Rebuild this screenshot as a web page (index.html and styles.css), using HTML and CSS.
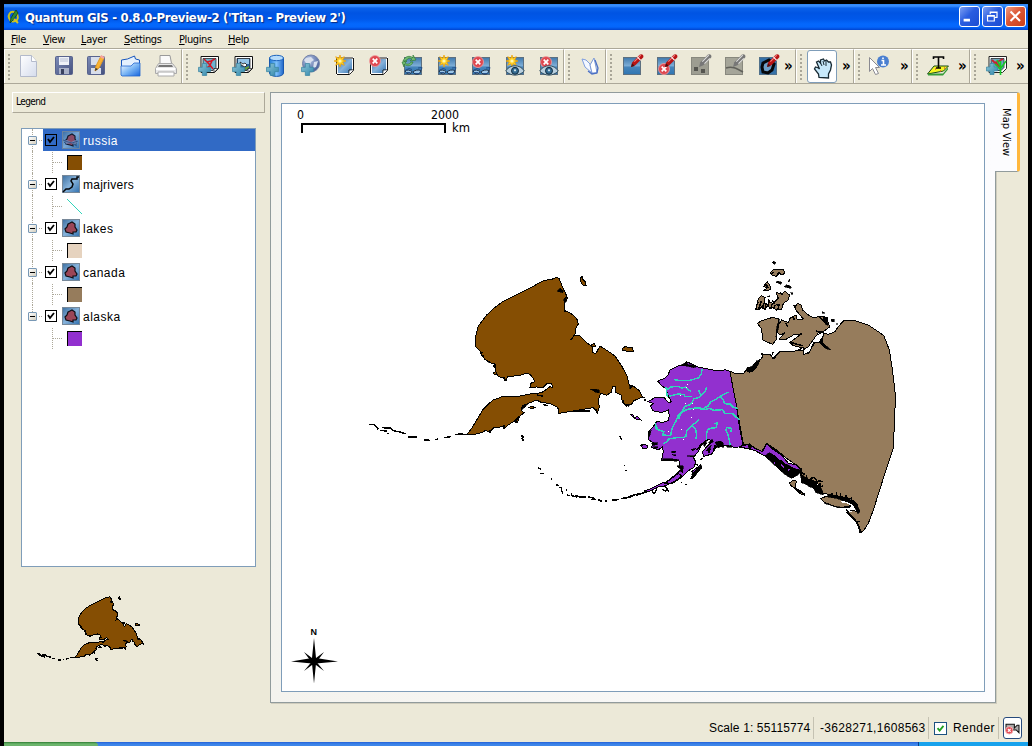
FILE: index.html
```html
<!DOCTYPE html>
<html lang="en">
<head>
<meta charset="utf-8">
<title>Quantum GIS</title>
<link rel="stylesheet" href="styles.css">
</head>
<body>
<svg class="defs" width="0" height="0">
  <defs>
    <linearGradient id="g-blue" x1="0" y1="0" x2="0" y2="1"><stop offset="0" stop-color="#3f78ac"/><stop offset=".5" stop-color="#7fafd8"/><stop offset=".55" stop-color="#4785bb"/><stop offset="1" stop-color="#2f76b2"/></linearGradient>
    <linearGradient id="g-tile" x1="0" y1="0" x2="1" y2="1"><stop offset="0" stop-color="#3d6fa0"/><stop offset=".5" stop-color="#86b2da"/><stop offset="1" stop-color="#2f6fae"/></linearGradient>
    <linearGradient id="g-cyl"><stop offset="0" stop-color="#1f7bd8"/><stop offset=".5" stop-color="#7cc0fa"/><stop offset="1" stop-color="#2166c8"/></linearGradient>
    <linearGradient id="g-doc" x1="0" y1="0" x2="1" y2="1"><stop offset="0" stop-color="#fff"/><stop offset="1" stop-color="#d5dcec"/></linearGradient>
    <linearGradient id="g-save" x1="0" y1="0" x2="1" y2="1"><stop offset="0" stop-color="#7d8cb8"/><stop offset="1" stop-color="#44507e"/></linearGradient>
    <linearGradient id="g-plus" x1="0" y1="0" x2="1" y2="1"><stop offset="0" stop-color="#8fc6d6"/><stop offset="1" stop-color="#2f86ac"/></linearGradient>
    <radialGradient id="g-globe" cx=".35" cy=".3" r=".8"><stop offset="0" stop-color="#b9c8e8"/><stop offset="1" stop-color="#3c5490"/></radialGradient>
    <linearGradient id="g-folder" x1="0" y1="0" x2="1" y2="1"><stop offset="0" stop-color="#fff"/><stop offset=".5" stop-color="#7db8f5"/><stop offset="1" stop-color="#1665dd"/></linearGradient>
    <symbol id="tile" viewBox="0 0 18 18"><rect x=".5" y=".5" width="17" height="17" fill="url(#g-blue)" stroke="#5d7080"/></symbol>
    <symbol id="plus" viewBox="0 0 12 12"><path d="M4 .5h4V4h3.500v4H8v3.500H4V8H.5V4H4z" fill="url(#g-plus)" stroke="#3b86a3" stroke-width=".7"/></symbol>
    <symbol id="star" viewBox="0 0 12 12"><path d="M6 0l1 3.300L10.300 1.700 8.700 5 12 6 8.700 7l1.600 3.300L7 8.700 6 12 5 8.700 1.700 10.300 3.300 7 0 6l3.300-1L1.700 1.700 5 3.300z" fill="#ffd42a" stroke="#f0a000" stroke-width=".7"/><circle cx="6" cy="6" r="1.600" fill="#fff8b0"/></symbol>
    <symbol id="no" viewBox="0 0 12 12"><circle cx="6" cy="6" r="5.500" fill="#df4850" stroke="#f0a0a0" stroke-width=".8"/><path d="M3.700 3.700l4.600 4.600M8.300 3.700L3.700 8.300" stroke="#fff" stroke-width="1.700"/></symbol>
    <symbol id="pen" viewBox="0 0 13 13"><path d="M1 12l1-4L9 .8c2-1.500 4.500.7 3 2.700L5 10.500z" fill="#b81414"/><path d="M4 7L10 1" stroke="#f58080" stroke-width="1"/><path d="M1 12l.8-3.500 2.700 2.700z" fill="#501010"/><path d="M7 3l3 3" stroke="#fff" stroke-width="1"/></symbol>
    <symbol id="graypen" viewBox="0 0 13 13"><path d="M1 12l1-4L9 .8c2-1.500 4.500.7 3 2.700L5 10.500z" fill="#777"/><path d="M4 7L10 1M6 9l5-5" stroke="#ddd"/></symbol>
    <symbol id="eye" viewBox="0 0 20 11"><path d="M.7 6C5-1 15-1 19.300 6 14 11.500 6 11.500.7 6z" fill="#b9d0df" stroke="#35505f" stroke-width="1"/><circle cx="10" cy="5.800" r="3.500" fill="#346b91" stroke="#112b3e"/><circle cx="10" cy="5.300" r="1.100" fill="#d5e7f1"/></symbol>
    <symbol id="specs" viewBox="0 0 20 10"><path d="M2 5c2-1.500 5-1 7 .5C8 9 4 8.500 2 5zM10 6c2-2 5-2.500 8-1.500C17 9 12 9.500 10 6z" fill="#9cc6e8" stroke="#16263a" stroke-width=".9"/><path d="M2 4.500l4-2 3 1M18 4.500l1-3-4 .5M3.500 6.500h4M12 7.500h4" fill="none" stroke="#1d4a86" stroke-width=".9"/></symbol>
    <symbol id="sheet" viewBox="0 0 18 18"><path d="M1 1h16v12l-4 4H1z" fill="url(#g-tile)" stroke="#fff" stroke-width="2"/><path d="M17.500 1v12.500l-4 4H1M13 17v-4h4M.5 17V1H17" fill="none" stroke="#111"/><path d="M13.500 13.500H17l-3.500 3.500z" fill="#fff"/></symbol>
    <symbol id="poly" viewBox="0 0 18 18"><rect x=".5" y=".5" width="17" height="17" fill="url(#g-tile)" stroke="#789"/><path d="M6 5L8 4 10 3 13 5 13 8 15 11 14 13 11 13 11 15 8 14 4 13 3 10 5 8z" fill="#9b4657" stroke="#0d0d13" stroke-width="1.200"/></symbol>
    <g id="russia">
      <path class="brown" d="M597 55L589 53 575 58 550 62 512 83 467 105 425 127 405 142 380 165 355 198 347 230 347 260 360 273 365 285 375 298 390 308 405 312 408 338 415 350 432 353 438 362 442 350 480 346 497 340 510 343 520 355 525 365 512 370 510 382 530 381 550 382 562 370 575 372 578 382 570 380 560 388 545 398 510 402 470 410 432 408 400 420 385 432 368 450 350 480 335 505 322 522 345 523 365 518 375 512 390 515 402 503 428 500 432 507 442 497 460 485 472 488 478 470 492 458 483 450 487 438 505 430 530 420 545 428 570 430 590 440 597 450 597 460 640 453 700 443 712 458 718 440 715 420 722 400 740 406 755 396 757 380 767 380 768 398 783 405 787 425 800 438 815 432 822 422 838 415 848 412 838 392 820 378 808 375 800 345 785 318 765 288 745 274 720 258 708 280 697 278 698 262 683 250 660 228 645 225 632 240 648 218 645 208 655 192 650 175 635 162 615 152 612 130 622 115 615 95 605 75z"/>
      <path class="brown" d="M661 54l5-5 2 8 9 10 1 9-8 1-8-12zM787 265l8-5 23 4 2 10-13 2-20-6zM505 442l13-2 8 3-10 3zM400 337l8-2 3 7-9 1zM693 253l10-2 4 7-9 3z"/>
      <path class="ink" d="M592 94L600 84 611 93 608 98zM611 118L619 110 620 122 614 130zM376 299l14 6-2 4zM690 387l28 2 0 10-10-2zM808 376l10 3-8 9zM797 432l14 2-6 6zM483 450l6-12 14-6-10 12z"/>
      <path class="coast" d="M28 493L43 494 55 508M66 503L90 504 100 512 120 516 136 522M60 511l20 2M80 520h8M145 531h25M191 540l20 1M226 539l7-2M252 533l20-3M284 524l18-2 20 2M487 525l-2 4h6l-5 7 5 6h-5M388 510l3 10M433 495l-2 12M463 484l9 3M550 433l12 5M848 412l5 2M852 420h4M615 155l-2-18"/>
      <path class="coast" d="M405 312l-4 8 6 4M432 353l3 9M478 470l-12 12 2 6M530 405l18 3M640 453h50M712 458l-6-12M787 425l4-4M366 276l-2 10 8 2M560 370l-6 8"/>
    </g>
  </defs>
</svg>

<div class="screen">
  <header class="titlebar">
    <svg class="logo" viewBox="0 0 14 16"><path d="M7 3C3 2 1 6 2 9s4 5 8 2c2-3 0-8-3-8z" fill="none" stroke="#c9c41c" stroke-width="2"/><path d="M9 1l2 3-4 6-4 4 1-5 3-5z" fill="#2d8a33" stroke="#153e19" stroke-width=".8"/><path d="M7 10l4 4" stroke="#d8c521" stroke-width="2"/></svg>
    <span class="title">Quantum GIS - 0.8.0-Preview-2 ('Titan - Preview 2')</span>
    <span class="winbtns">
      <svg class="winbtn" viewBox="0 0 21 21"><rect x="4" y="13" width="7" height="3" fill="#fff"/></svg>
      <svg class="winbtn" viewBox="0 0 21 21"><path d="M8 8V5.500h7.500v6H13M8 6h8" fill="none" stroke="#fff" stroke-width="1.300"/><path d="M5 9.500h7.500v6H5zM5 10h8" fill="none" stroke="#fff" stroke-width="1.300"/></svg>
      <svg class="winbtn close" viewBox="0 0 21 21"><path d="M5 5l10.500 10.500M15.500 5L5 15.500" stroke="#fff" stroke-width="2.300"/></svg>
    </span>
  </header>
  <nav class="menu"><span class="m1"><u>F</u>ile</span><span class="m2"><u>V</u>iew</span><span class="m3"><u>L</u>ayer</span><span class="m4"><u>S</u>ettings</span><span class="m5"><u>P</u>lugins</span><span><u>H</u>elp</span></nav>

  <div class="toolbar">
    <div class="group files"><i class="grip"></i>
      <svg class="ic" viewBox="0 0 24 24"><path d="M4.500 1.500h11l5 6v15h-16z" fill="url(#g-doc)" stroke="#b3bacb"/><path d="M15.500 1.500v6h5" fill="#fff" stroke="#b3bacb"/></svg>
      <svg class="ic" viewBox="0 0 24 24"><rect x="5.500" y="2.500" width="17" height="18" rx="1" fill="url(#g-save)" stroke="#59648e"/><path d="M9 3h10v8H9z" fill="#eef1f8"/><path d="M10 5h8M10 7h8" stroke="#b8c0d5"/><path d="M9 14h10v6H9z" fill="#a9b1c8"/><path d="M11 15h3v5h-3z" fill="#39415f"/></svg>
      <svg class="ic" viewBox="0 0 24 24"><rect x="3.500" y="2.500" width="17" height="18" rx="1" fill="url(#g-save)" stroke="#59648e"/><path d="M7 3h10v8H7zM7 14h10v6H7z" fill="#d8deeb"/><path d="M11 17l1-5 5-10 3 2-5 10z" fill="#f9b233" stroke="#e09a26"/><path d="M16.500 2l3.500 2" stroke="#f5a3a0" stroke-width="2.500"/><path d="M11 17l.5-3 2.500 1z" fill="#333"/></svg>
      <svg class="ic" viewBox="0 0 24 24"><path d="M3.500 10V6l6-1 7-3 1 3 4 1v15h-18z" fill="#e4f0fd" stroke="#1856bd"/><path d="M3 21V12h10l3-3h6v13H4z" fill="url(#g-folder)" stroke="#2265cf" stroke-width=".8"/></svg>
      <svg class="ic" viewBox="0 0 24 24"><path d="M8 12V1.500h10L20 12" fill="#fafafa" stroke="#9a9a9a"/><path d="M6.500 9.500h14l4 5v5h-21v-5z" fill="#e7e7e7" stroke="#aaa"/><path d="M7 11h13l1 2H6z" fill="#777"/><path d="M6 18h16v4H6z" fill="#fff" stroke="#aaa"/><path d="M4 15h19" stroke="#fff" stroke-width="2"/></svg>
    </div>
    <div class="group layers"><i class="grip"></i>
      <svg class="ic" viewBox="0 0 24 24"><path d="M4 2.500h17.500v12l-4 4H4z" fill="#fff" stroke="#111"/><path d="M6 4.500h13v9l-3 3H6z" fill="#6eb4cf" stroke="#111" stroke-width=".7"/><path d="M7 5l3 3 4-1 4-2M10 8l3 3 3 4M9 15l4-4 2-4" fill="none" stroke="#d21725" stroke-width="1.500"/><path d="M17 14.500h4l-4 4z" fill="#fff" stroke="#111" stroke-width=".7"/><use href="#plus" x="1" y="9" width="13" height="13"/></svg>
      <svg class="ic" viewBox="0 0 24 24"><path d="M4 2.500h17.500v12l-4 4H4z" fill="#fff" stroke="#111"/><path d="M6 4.500h13v9l-3 3H6z" fill="#2c65a0" stroke="#111" stroke-width=".7"/><path d="M7 5h11v5H7z" fill="#94c5e8"/><path d="M9 8l3 2 2-1 2 2-2 2-4-2z" fill="#fff" stroke="#111" stroke-width=".8"/><path d="M13 14l5-2v2l-3 2z" fill="#679b35"/><path d="M17 14.500h4l-4 4z" fill="#fff" stroke="#111" stroke-width=".7"/><use href="#plus" x="1" y="9" width="13" height="13"/></svg>
      <svg class="ic" viewBox="0 0 24 24"><path d="M4.500 4v15c0 4.500 14 4.500 14 0V4z" fill="url(#g-cyl)" stroke="#1958ae"/><ellipse cx="11.500" cy="4" rx="7" ry="2.700" fill="#b7dcfb" stroke="#1b63bd"/><use href="#plus" x="1" y="9" width="13" height="13"/></svg>
      <svg class="ic" viewBox="0 0 24 24"><circle cx="12" cy="9.500" r="8.500" fill="url(#g-globe)" stroke="#7684a8"/><path d="M7 4l5-1 3 3-3 2-1 3-4-2-2-3zM15 8l4-1-2 6-3 1z" fill="#d9e0ee"/><use href="#plus" x="2" y="9" width="13" height="13"/></svg>
      <svg class="ic" viewBox="0 0 24 24"><use href="#sheet" x="3" y="3" width="18" height="18"/><use href="#star" x="1" y="1" width="12" height="12"/></svg>
      <svg class="ic" viewBox="0 0 24 24"><use href="#sheet" x="3" y="3" width="18" height="18"/><use href="#no" x="2" y="1" width="12" height="12"/></svg>
      <svg class="ic" viewBox="0 0 24 24"><use href="#tile" x="3" y="3" width="18" height="18"/><path d="M2 7c2-5 7-6 10-3V1l3 5-6 1 2-2C8 3 6 5 5 7zM12 8c-1 4-6 5-9 2v3L1 8l5-1-2 2c2 2 5 1 6-1z" fill="#71ba72" stroke="#327b37" stroke-width=".7"/><use href="#specs" x="2" y="12" width="20" height="10"/></svg>
      <svg class="ic" viewBox="0 0 24 24"><use href="#tile" x="3" y="3" width="18" height="18"/><use href="#star" x="3" y="1" width="12" height="12"/><use href="#specs" x="2" y="12" width="20" height="10"/></svg>
      <svg class="ic" viewBox="0 0 24 24"><use href="#tile" x="3" y="3" width="18" height="18"/><use href="#no" x="3" y="2" width="12" height="12"/><use href="#specs" x="2" y="12" width="20" height="10"/></svg>
      <svg class="ic" viewBox="0 0 24 24"><use href="#tile" x="3" y="3" width="18" height="18"/><use href="#star" x="3" y="1" width="12" height="12"/><use href="#eye" x="2" y="11" width="20" height="11"/></svg>
      <svg class="ic" viewBox="0 0 24 24"><use href="#tile" x="3" y="3" width="18" height="18"/><use href="#no" x="3" y="2" width="12" height="12"/><use href="#eye" x="2" y="11" width="20" height="11"/></svg>
    </div>
    <div class="group help"><i class="grip"></i>
      <svg class="ic" viewBox="0 0 24 24"><path d="M4 5l3 8 7 6-2-9-4-4z" fill="#f4f8ff" stroke="#7f9ee0"/><path d="M12 11l4-7 2 9 1 6-5 0z" fill="#fff" stroke="#7a98d5"/><path d="M17 6l3 8-1 5-5 1-4-3" fill="none" stroke="#4a6fc4" stroke-width="1.300"/></svg>
    </div>
    <div class="group edit"><i class="grip"></i>
      <svg class="ic" viewBox="0 0 24 24"><use href="#tile" x="3" y="3" width="18" height="18"/><use href="#pen" x="10" y="0" width="14" height="14"/></svg>
      <svg class="ic" viewBox="0 0 24 24"><use href="#tile" x="3" y="3" width="18" height="18"/><use href="#no" x="4" y="9" width="12" height="12"/><use href="#pen" x="10" y="0" width="14" height="14"/></svg>
      <svg class="ic" viewBox="0 0 24 24"><rect x="3.500" y="3.500" width="17" height="17" fill="#9d9d91" stroke="#88887e"/><path d="M6 13h4v4H6zM13 15h4v4h-4z" fill="#55554f"/><use href="#graypen" x="10" y="0" width="14" height="14"/></svg>
      <svg class="ic" viewBox="0 0 24 24"><rect x="3.500" y="3.500" width="17" height="17" fill="#a5a599" stroke="#88887e"/><path d="M4 14c6-2 10 0 17 4" fill="none" stroke="#60605a" stroke-width="1.500"/><use href="#graypen" x="10" y="0" width="14" height="14"/></svg>
      <svg class="ic" viewBox="0 0 24 24"><rect x="3.500" y="3.500" width="17" height="17" fill="#3672a8" stroke="#51718b"/><path d="M7 9l6-3 5 4-2 6-4 3-5-1-1-5z" fill="#6d9ec8" stroke="#06070a" stroke-width="3"/><use href="#pen" x="10" y="0" width="14" height="14"/></svg>
      <b class="more">»</b>
    </div>
    <div class="group nav"><i class="grip"></i>
      <span class="active"><svg class="ic" viewBox="0 0 24 24"><path d="M8 21.500l-.5-3.500-4-5 1-2 3 1 1 1-3-7 2-1 2 2 0-3 3-1 1 2 2-1 2 2 2 0 1 3-1 5-2 4 0 4z" fill="#c7e9fb" stroke="#172932" stroke-width="1.300"/><path d="M9 6l2 4M12 5l1 4M15 5v5" stroke="#172932"/></svg></span><b class="more">»</b>
    </div>
    <div class="group info"><i class="grip"></i>
      <svg class="ic" viewBox="0 0 24 24"><path d="M.5 3.500v14l3-3 3 6 3-1-3-6h4z" fill="#fff" stroke="#8a8a91"/><circle cx="14" cy="7.500" r="6" fill="#4a7fd0"/><path d="M12.500 6.500h2v4M12 11h5M14 3.500v1.500" fill="none" stroke="#fff" stroke-width="1.600"/></svg><b class="more">»</b>
    </div>
    <div class="group label"><i class="grip"></i>
      <svg class="ic" viewBox="0 0 24 24"><path d="M8 12h14.500l-5 5-16 3z" fill="#f4f522" stroke="#174b18"/><path d="M2 19.500h15l5-6v2l-5 6H2z" fill="#359d37"/><path d="M7.500 5V3h10v2M12.500 3v11M10 14h5" fill="none" stroke="#050505" stroke-width="1.600"/><path d="M9 15h1M14 17h1M18 14h1" stroke="#e85a24" stroke-width="1.500"/></svg><b class="more">»</b>
    </div>
    <div class="group grass"><i class="grip"></i>
      <svg class="ic" viewBox="0 0 24 24"><path d="M4 2.500h17.500v12l-4 4H4z" fill="#fff" stroke="#222"/><path d="M6 4.500h13v9l-3 3H6z" fill="#6aa9c1" stroke="#111" stroke-width=".7"/><path d="M7 6l3 3 4-2 4-2M10 8l5 5" fill="none" stroke="#c82030" stroke-width="1.800"/><path d="M15.500 21V7M15 15l-5-5M16 14l5-7M15 12l-3-6" fill="none" stroke="#16c928" stroke-width="1.600"/><use href="#plus" x="1" y="9" width="12" height="12"/></svg><b class="more">»</b>
    </div>
  </div>

  <main class="work">
    <aside class="legend">
      <div class="docktitle">Legend</div>
      <div class="tree">
        <div class="layer selected"><i class="node"></i><svg class="check" viewBox="0 0 10 10"><path d="M2 4l2 3 4-5" /></svg><svg class="licon" viewBox="0 0 18 18"><use href="#poly"/><path d="M1 9l4 0 4 2 7-3 0 4-4 2-3-2-5 1z" fill="#79a4d6" opacity=".7"/><path d="M1 9l5 2 4 1 6-2M2 11l3 3M11 13l4 2" fill="none" stroke="#27436d" stroke-width=".8"/><rect width="18" height="18" fill="#316ac5" opacity=".15"/></svg><span class="name">russia</span></div>
        <div class="style"><svg class="swatch" viewBox="0 0 15 15"><path d="M0 0h15v15H0z" fill="#000"/><path d="M1 1h14v14H1z" fill="#854e03"/></svg></div>
        <div class="layer"><i class="node"></i><svg class="check" viewBox="0 0 10 10"><path d="M2 4l2 3 4-5"/></svg><svg class="licon" viewBox="0 0 18 18"><rect x=".5" y=".5" width="17" height="17" fill="url(#g-tile)" stroke="#789"/><path d="M17 2h-2v2h-5l-1 2 2 3-1 3-3 2H4l-3 3" fill="none" stroke="#05070b" stroke-width="1.500"/></svg><span class="name rivers">majrivers</span></div>
        <div class="style"><svg class="swatch" viewBox="0 0 15 15"><path d="M0 0l15 15" stroke="#30d4ba"/></svg></div>
        <div class="layer"><i class="node"></i><svg class="check" viewBox="0 0 10 10"><path d="M2 4l2 3 4-5"/></svg><svg class="licon"><use href="#poly"/></svg><span class="name">lakes</span></div>
        <div class="style"><svg class="swatch" viewBox="0 0 15 15"><path d="M0 0h15v15H0z" fill="#000"/><path d="M1 1h14v14H1z" fill="#e6d3bf"/></svg></div>
        <div class="layer"><i class="node"></i><svg class="check" viewBox="0 0 10 10"><path d="M2 4l2 3 4-5"/></svg><svg class="licon"><use href="#poly"/></svg><span class="name">canada</span></div>
        <div class="style"><svg class="swatch" viewBox="0 0 15 15"><path d="M0 0h15v15H0z" fill="#000"/><path d="M1 1h14v14H1z" fill="#967c5c"/></svg></div>
        <div class="layer last"><i class="node"></i><svg class="check" viewBox="0 0 10 10"><path d="M2 4l2 3 4-5"/></svg><svg class="licon"><use href="#poly"/></svg><span class="name">alaska</span></div>
        <div class="style last"><svg class="swatch" viewBox="0 0 15 15"><path d="M0 0h15v15H0z" fill="#000"/><path d="M1 1h14v14H1z" fill="#9230cf"/></svg></div>
      </div>
      <svg class="overview" viewBox="21 580 235 100"><g transform="translate(-105.800 489.500) scale(.387)"><use href="#russia" transform="translate(360 260) scale(.33333)"/></g></svg>
    </aside>

    <section class="panel">
      <svg class="map" viewBox="282 104 702 587">
        <use href="#russia" transform="translate(360 260) scale(.33333)"/>
        <g transform="translate(740 255) scale(.33333)">
          <path class="tan" d="M-30 349L-10 357 10 357 22 340 30 345 45 325 65 310 70 298 92 300 98 310 110 300 120 290 165 288 190 285 190 298 205 295 225 262 245 260 250 235 265 238 285 230 295 215 310 198 345 197 385 210 415 230 432 243 448 285 458 350 465 410 466 435 460 580 430 670 400 765 385 805 370 828 360 833 352 805 340 790 320 765 345 768 358 770 350 745 330 730 290 722 250 715 230 680 200 672 185 660 182 640 165 628 140 610 110 585 80 565 65 590 30 570 10 567z"/>
          <path class="tan" d="M53 205L65 197 95 188 115 190 118 205 110 230 108 255 98 268 68 255 65 222 58 213z"/>
          <path class="tan" d="M118 205L125 195 145 203 150 190 168 180 172 195 190 192 170 168 165 158 172 145 183 150 188 165 205 180 220 188 245 183 262 188 265 205 270 215 250 230 235 228 232 245 215 270 195 280 160 272 150 262 180 240 186 236 160 240 135 255 118 252 135 232 120 240 110 230z"/>
          <path class="tan" d="M90 54L102 43 130 44 135 54 126 60 115 52 110 64 95 60zM70 95L82 80 90 92 92 102 80 108 72 106 83 98zM47 165L55 130 65 122 75 128 72 145 85 150 75 162 65 155 58 165zM85 140L100 145 115 130 108 112 125 118 135 108 148 120 145 135 130 145 125 162 110 165 100 158 88 162z"/>
          <path class="ink" d="M96 22l5-3 8 4-6 5zM108 82l5-4 12 4-2 6zM132 95l8-6 14 6-1 5-12-2zM145 81l3-9 2 5zM152 112l7 2-3 5zM247 170l7 4-7 1zM274 193l9-1 0 9-8-1zM288 206l4-1v4zM250 184l12 4-3 7 6 16-7-2-8-10zM238 235L250 232 248 262 272 285 255 280 238 262zM22 350L20 338 35 335 52 315 55 328 38 350zM118 193L110 215 108 245 114 225zM82 124l8-2v4z"/>
          <path class="coast" d="M56 163l8-25M66 160l6-15M78 145l-3 20M92 162l4-14M102 162l3-12M114 163l3-15M28 355l4-18M42 345l10-18M98 312l8-6M136 204l8 10M160 182l3 14M92 58l10-6M14 352l12-16M48 338l10-20M68 300l-4-6M96 298l4-8M84 134l6 8M96 136l8 10M110 146l6 8M50 150l6-10M120 112l8 6M120 52l-6 8M76 88l8 8M160 152l8 2M240 186l10 12M228 228l14 4M152 262l18 6 20 4M175 286l12-8"/>
          <path class="water" d="M190 285L205 275 230 240 250 230 252 238 238 262 222 262 208 292 192 298z"/>
        </g>
        <g transform="translate(530 350) scale(.33333)">
          <path class="purple" d="M600 64L585 59 575 63 550 60 525 55 500 50 490 43 470 36 460 45 445 48 420 60 414 75 405 85 383 93 395 108 408 115 412 130 418 145 425 155 415 158 402 142 375 143 353 155 370 160 362 168 368 182 395 188 415 180 418 198 414 212 400 217 380 215 370 230 355 245 357 270 370 278 365 292 385 300 397 290 400 305 397 320 393 332 425 330 448 333 447 345 455 358 435 375 410 395 425 402 455 382 475 362 492 352 497 335 490 322 505 305 512 288 527 272 538 268 545 275 530 290 518 305 520 320 545 312 560 290 585 285 612 292 640 290 630 240 618 160 608 110z"/>
          <path class="purple" d="M485 365L500 354 512 345 515 355 500 362 495 378 482 388 490 372zM332 286l8-3 12 3-1 8-12 2zM302 193l8 2 2 8 10-4 10 11-10-1-12-7z"/>
          <path class="ink" d="M450 47L467 38 476 44 490 44 500 50 490 53 465 47zM356 245l8-4-4 14-4 10zM365 278l18 0-2 6-14 2zM370 290l14 0-2 5-10-1zM426 303l12 1-2 4-10 0zM484 298l14-3-10 8zM395 326l20 1 14 0 17 2-5 5-17-2-22 1zM425 313l14 2-2 3zM520 280l8-8 2 8-7 10zM528 302l16-18-6 20zM556 277l12-4 12 5 1 14-9-2-8 4zM536 278l10-10 4 8zM588 288l16-2 2 6-14 0zM485 372l12-12 17-15-4 15-12 14-8 8zM470 318l28-2-8 5zM440 348l20 0 0 8-8 2zM448 362l10-8 0 14z"/>
          <path class="purple" d="M343 423L365 415 385 404 402 397 420 400 405 408 385 411 365 421 348 427zM402 402L425 385 445 370 455 378 435 394 418 402z"/>
          <path class="river" d="M432 89L447 91 478 92 494 87 506 83 514 72 516 56M410 120L422 111 444 109 456 114 467 111 475 119 483 124M418 139L438 133 448 132 463 134 465 139 485 140M408 112l4 28M378 224L378 236 390 241 402 245 398 255 422 257 426 235 438 213 444 198 456 186 470 179 488 175 510 174 526 179 538 175 552 181 576 179 586 191 608 191 616 199 628 210M445 208L455 186 465 169 476 166 486 158 492 146 508 142 518 130 526 124 530 110M505 119l8 18M512 180L534 168 542 156 560 147 570 139 596 126M572 140L580 149 584 161 600 162 610 172 624 176M398 281L409 277 416 267 440 263 460 263 468 258 470 243 482 232 488 223 496 220 507 209M486 227L496 237 500 252 498 268M529 271L529 253 533 239 545 234 559 233 561 219 553 222M600 284L597 266 593 252 587 240 591 233 605 235 602 246M375 220l7 15"/>
          <path class="specks" d="M470 104h3M467 113h3M450 137h3M485 160h3M464 162h3M488 178h3M483 203h3M453 238h3M414 246h3M459 268h3"/>
          <path class="coast" d="M24 353l10 6M30 370l12 1M64 387h3M77 405l10 1M88 411l8 4M93 418l6 12M108 419l4 2M111 435l8 2M124 430l0 7 16 4M137 435l12 6 18-1M154 439l15 4M175 441l19 4M184 449l14 0M205 449l10 5M226 453h4M245 450l22-1M274 446l15-3 16-3M300 439l12-4 15-4M288 444l20-6M318 436l22-7M332 431l20-5M365 421l7 10 5-7 4-8M397 418l10 5 5-4 6 5M395 410l10-2 8 10M282 346h4M284 362l6 0M268 258l3 2 0 4 5 3M333 286l8-2M454 395v4M466 404h4M342 150h5M500 300l18-22M512 330l6-6M494 340l10 6M540 296l-4 12M550 300l6-14"/>
        </g>
        <g transform="translate(740 400) scale(.33333)">
          <path class="purple" d="M5 137L30 133 45 145 68 155 80 130 100 143 125 165 145 190 170 195 185 212 160 232 140 225 115 205 95 185 75 168 45 152 20 145 0 142z"/>
          <path class="tan" d="M148 249l12-8 9 2-4 20 14 12 14 6 1 5-13-5-15-15-13-9zM242 296L256 290 285 288 310 298 328 298 340 312 320 322 295 322 270 314 250 305z"/>
          <path class="ink" d="M75 167L88 158 115 172 130 187 150 198 165 206 182 210 178 222 155 235 135 224 115 205 95 188zM182 222L197 232 200 228 205 240 220 244 235 258 245 266 250 285 228 278 220 265 205 258 195 252 184 248zM255 290L270 284 290 288 310 293 325 296 340 304 352 315 360 335 354 342 346 325 330 312 310 303 290 295 270 292zM243 296L253 307 270 314 290 322 305 322 280 318 255 311zM28 130l8 10-6 8-6-8z"/>
          <path class="coast" d="M183 203v26M199 226v30M214 230v24M229 238v24M240 250v20M276 280v15M289 275v20M302 279v20M318 285v20M334 290v19M80 130l20 18 25 17M174 268l18 14M338 350l8 10 10 18 8 20M310 322l24-2M206 240l14-8 8 6M225 250l14-8 8 4M240 262l10-6M184 218l12 6M320 335l10 12 16 14M346 364h14"/>
          <path class="whiteline" d="M302 305l16 2 14 6 8 8M320 326l14 10"/>
          <path class="violet" d="M90 155l10 6 12 8 10 12M103 188l3 3M124 194l8 8M150 195l12 8M127 180l14 12M143 211l6-3"/>
        </g>
        <path d="M302 133v-9h143v9" fill="none" stroke="#000" stroke-width="2"/>
        <text x="297" y="119" class="scale" textLength="7" lengthAdjust="spacingAndGlyphs">0</text><text x="431" y="119" class="scale" textLength="28" lengthAdjust="spacingAndGlyphs">2000</text><text x="452" y="132" class="scale" textLength="18" lengthAdjust="spacingAndGlyphs">km</text>
        <text x="310.500" y="635" class="north">N</text>
        <path class="compass" d="M314 638l2 20 22 3.500-22 2-2 20-2-20-21-2 21-3.500z"/><path class="compass" d="M304 652l10 7.500 10-7.500-7.500 10 7.500 9-10-7.500-10 7.500 7.500-9z"/><circle cx="314" cy="661.500" r="3.500"/>
      </svg>
    </section>
    <div class="tab"><span>Map View</span></div>
  </main>

  <footer class="status">
    <span class="cell scaletext">Scale 1: 55115774</span><span class="cell coords">-3628271,1608563</span>
    <span class="cell render"><svg class="rcheck" viewBox="0 0 13 13"><path d="M3 6l2.500 3L10 3.500" fill="none" stroke="#21a121" stroke-width="2.200"/></svg><span>Render</span></span>
    <span class="cam"><svg viewBox="0 0 16 14"><path d="M1 2.500h9v4l3-3h2v8l-3-3H1z" fill="#aaa" stroke="#111" stroke-width="1.100"/><circle cx="4.500" cy="9" r="4" fill="#e24b55" stroke="#f4b7b7"/><path d="M3 7.500l3 3m0-3l-3 3" stroke="#fff" stroke-width="1.200"/></svg></span>
  </footer>
  <div class="taskbar"><i class="start"></i><i class="tray"></i></div>
</div>
</body>
</html>
```

FILE: styles.css
```css
* { box-sizing: border-box; }
body { margin: 0; background: #000; font-family: "DejaVu Sans Condensed", "DejaVu Sans", sans-serif; color: #000; }
.defs { display: block; height: 0; }
.screen { width: 1032px; height: 746px; padding: 4px 4px 0; background: #000; display: flex; flex-direction: column; overflow: hidden; }
.titlebar { height: 26px; flex: none; display: flex; align-items: center; padding: 0 2px 1px 3px; background: linear-gradient(#2d86f5 0, #3b90ff 2px, #0a62ea 4px, #0054e3 9px, #0058ea 15px, #0468fd 20px, #0466fb 23px, #0044d0 26px); }
.logo { width: 14px; height: 16px; margin-right: 4px; }
.title { color: #fff; font: bold 13px "DejaVu Sans Condensed", sans-serif; letter-spacing: -.33px; padding-top: 1px; text-shadow: 1px 1px 1px #0a2a80; white-space: nowrap; }
.winbtns { display: flex; gap: 2px; margin-left: auto; }
.winbtn { width: 21px; height: 21px; border: 1px solid #fff; border-radius: 3px; background: linear-gradient(135deg, #7d9ff2, #2a5de0 45%, #1c4dd2); }
.close { background: linear-gradient(135deg, #ee9a80, #dc5634 45%, #ca3f1a); }
.menu { height: 18px; flex: none; display: flex; align-items: center; padding-left: 7px; background: #ece9d8; font-size: 11px; letter-spacing: -.4px; white-space: nowrap; }
.menu u { text-underline-offset: 1px; }
.m1 { width: 32px; } .m2 { width: 38px; } .m3 { width: 43px; } .m4 { width: 55px; } .m5 { width: 49px; }
.toolbar { height: 36px; flex: none; display: flex; background: #ece9d8; border-top: 1px solid #aca899; border-bottom: 1px solid #aca899; }
.group { display: flex; align-items: center; position: relative; height: 34px; border-right: 1px solid #aca899; border-top: 1px solid #fff; border-left: 1px solid #fff; flex: none; }
.grip { position: absolute; left: 3px; top: 4px; width: 2px; height: 27px; background: repeating-linear-gradient(#a9a698 0 2px, transparent 2px 4px); }
.ic { width: 24px; height: 24px; margin: -1px 5px 0; flex: none; overflow: visible; }
.files { width: 178px; padding-left: 6px; }
.layers { width: 382px; padding-left: 9px; }
.help { width: 42px; padding-left: 8px; }
.edit { width: 190px; padding-left: 8px; }
.nav { width: 58px; padding-left: 10px; }
.info { width: 58px; padding-left: 9px; }
.label { width: 58px; padding-left: 8px; }
.grass { width: 58px; padding-left: 9px; border-right: 0; }
.active { width: 30px; height: 33px; display: flex; align-items: center; justify-content: center; background: #fff; border: 1px solid #7f9db9; border-radius: 3px; flex: none; }
.active .ic { margin: 3px 0 0 2px; }
.more { font: bold 15px/16px "DejaVu Sans Condensed", sans-serif; width: 10px; margin-left: 2px; margin-top: -1px; }
.nav .more { margin-left: 5px; }
.label .more { margin-left: 3px; }
.edit .more { margin-left: -1px; }
.work { flex: 1; min-height: 0; display: flex; align-items: flex-start; padding: 8px 8px 0; background: #ece9d8; }
.legend { width: 258px; flex: none; }
.docktitle { width: 253px; height: 21px; border: 1px solid #aca899; border-top-color: #fff; border-left-color: #fff; font-size: 10px; line-height: 18px; letter-spacing: -.6px; padding-left: 3px; }
.tree { width: 235px; height: 439px; margin: 15px 0 0 9px; border: 1px solid #7f9db9; background: #fff; }
.layer { height: 22px; display: flex; align-items: center; padding-left: 6px; background: linear-gradient(#fff, #fff) 0 0 / 21px 100% no-repeat; position: relative; }
.layer::before, .style::before { content: ""; position: absolute; left: 10px; top: 0; height: 100%; border-left: 1px dotted #aca899; }
.layer.last::before { height: 7px; }
.style.last::before { display: none; }
.selected { background: linear-gradient(90deg, #fff 21px, #316ac5 21px); color: #fff; }
.node { width: 9px; height: 9px; border: 1px solid #7898b5; border-radius: 1px; background: linear-gradient(#000, #000) center / 5px 1px no-repeat, linear-gradient(135deg, #fff, #d4cfbf); position: relative; }
.node::after { content: ""; position: absolute; left: 10px; top: 3px; width: 3px; border-top: 1px dotted #aca899; }
.check { width: 12px; height: 12px; margin-left: 8px; border: 1px solid #000; background: #fff; }
.selected .check { background: #316ac5; }
.check path { fill: none; stroke: #000; stroke-width: 1.8; }
.licon { width: 18px; height: 18px; margin-left: 5px; }
.name { font: 12px "Liberation Sans", sans-serif; letter-spacing: .5px; margin-left: 3px; padding-top: 2px; }
.rivers { letter-spacing: .25px; }
.style { position: relative; height: 22px; padding: 4px 0 0 45px; }
.style::after { content: ""; position: absolute; left: 30px; top: 1px; width: 9px; height: 21px; border-left: 1px dotted #aca899; background: repeating-linear-gradient(90deg, #aca899 0 1px, transparent 1px 2px) 0 10px / 9px 1px no-repeat; }
.swatch { display: block; width: 15px; height: 15px; }
.overview { display: block; width: 235px; height: 100px; margin: 13px 0 0 9px; shape-rendering: crispEdges; }
.panel { width: 726px; height: 611px; flex: none; border: 1px solid #919b9c; padding: 10px; background: linear-gradient(90deg, #f4f3ee, #fcfcfe); box-shadow: 1px 1px 0 #cfccbd; }
.map { display: block; width: 704px; height: 589px; border: 1px solid #7f9db9; background: #fff; shape-rendering: crispEdges; }
.tab { width: 25px; height: 80px; margin-left: -1px; z-index: 1; flex: none; background: #fcfcfe; border: 1px solid #919b9c; border-left: 0; border-right: 3px solid #ffb73d; border-radius: 0 3px 3px 0; display: flex; align-items: center; justify-content: center; }
.tab span { writing-mode: vertical-rl; font-size: 11px; letter-spacing: .1px; padding-top: 1px; }
.brown { fill: #854e03; stroke: #000; vector-effect: non-scaling-stroke; }
.tan { fill: #967c5c; stroke: #000; vector-effect: non-scaling-stroke; }
.purple { fill: #9230cf; stroke: #000; vector-effect: non-scaling-stroke; }
.ink { fill: #000; stroke: #000; stroke-width: .6px; vector-effect: non-scaling-stroke; }
.coast { fill: none; stroke: #000; stroke-width: 1.5px; vector-effect: non-scaling-stroke; }
.river { fill: none; stroke: #30d4ba; stroke-width: 1.5px; vector-effect: non-scaling-stroke; }
.water { fill: #fff; stroke: #000; vector-effect: non-scaling-stroke; }
.specks { stroke: #fff; stroke-width: 3px; }
.whiteline { fill: none; stroke: #fff; stroke-width: 4px; }
.violet { fill: none; stroke: #9230cf; stroke-width: 4px; }
.scale { font: 12px "DejaVu Sans Condensed", sans-serif; }
.north { font: bold 9px "Liberation Sans", sans-serif; }
.compass { fill: #000; shape-rendering: auto; }
.status { height: 30px; flex: none; background: #ece9d8; display: flex; align-items: center; justify-content: flex-end; padding: 2px 6px 0 0; font: 12px "Liberation Sans", sans-serif; letter-spacing: .3px; white-space: nowrap; }
.cell { height: 22px; display: flex; align-items: center; border-right: 1px solid #c5c2b2; }
.scaletext { width: 105px; letter-spacing: .13px; }
.coords { width: 115px; padding-left: 6px; }
.render { width: 70px; padding-left: 5px; margin-right: 4px; letter-spacing: .45px; }
.rcheck { width: 13px; height: 13px; border: 1px solid #1c5180; background: #fff; margin-right: 6px; }
.cam { width: 19px; height: 22px; border: 1px solid #264a7c; border-radius: 3px; background: #fff; display: flex; align-items: center; justify-content: center; }
.cam svg { width: 15px; height: 13px; }
.taskbar { height: 4px; flex: none; display: flex; background: linear-gradient(#2461d8, #3c83e8 2px, #3f87ea); }
.start { width: 94px; background: linear-gradient(#2f7a35, #6cb86c 2px, #6cb06c); border-radius: 0 6px 0 0; }
.tray { width: 110px; margin-left: auto; background: #18a2ec; border-left: 1px solid #0b3a8c; }
```
